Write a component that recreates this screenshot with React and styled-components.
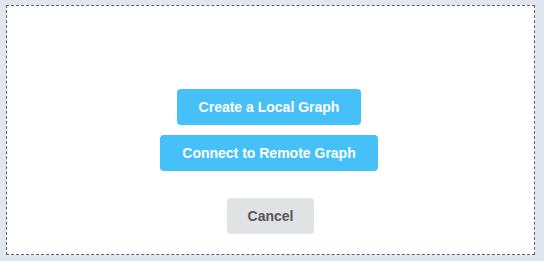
import React from "react";
import styled, { createGlobalStyle } from "styled-components";

const GlobalStyle = createGlobalStyle`
  html, body {
    margin: 0;
    padding: 0;
    background: #e2e7ef;
    font-family: "Liberation Sans", Arial, sans-serif;
  }
`;

const Page = styled.div`
  box-sizing: border-box;
  width: 544px;
  height: 261px;
  padding: 5px 9px 6px 6px;
`;

const DropZone = styled.div`
  box-sizing: border-box;
  height: 100%;
  background: #ffffff;
  border: 1px dashed #55626f;
  display: flex;
  flex-direction: column;
  align-items: center;
  padding: 83px 3px 0 0;
`;

const Button = styled.button`
  box-sizing: border-box;
  height: 36px;
  padding: 0 22px;
  border: none;
  border-radius: 4px;
  font-family: "Liberation Sans", Arial, sans-serif;
  font-size: 14px;
  font-weight: bold;
  cursor: pointer;
  background: ${(p) => (p.$secondary ? "#e1e2e4" : "#46c0f8")};
  color: ${(p) => (p.$secondary ? "#555659" : "#ffffff")};
  margin-top: ${(p) => p.$gap || 0}px;
`;

const CancelButton = styled(Button)`
  padding: 0 21px;
  margin-left: 3px;
`;

export default function App() {
  return (
    <>
      <GlobalStyle />
      <Page>
        <DropZone>
          <Button>Create a Local Graph</Button>
          <Button $gap={10}>Connect to Remote Graph</Button>
          <CancelButton $gap={27} $secondary>
            Cancel
          </CancelButton>
        </DropZone>
      </Page>
    </>
  );
}
